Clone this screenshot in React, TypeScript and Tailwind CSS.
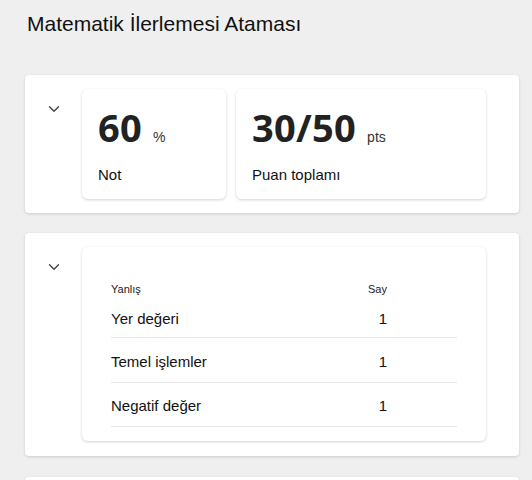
import { ChevronDown } from 'lucide-react'

const rows = [
  { label: 'Yer değeri', count: 1, h: 'h-[37px]', pad: 'pt-0' },
  { label: 'Temel işlemler', count: 1, h: 'h-[45px]', pad: 'pt-[4px]' },
  { label: 'Negatif değer', count: 1, h: 'h-[44px]', pad: 'pt-[3px]' },
]

function Chevron() {
  return (
    <div className="w-[57px] flex justify-center pt-[11px] pl-[1px]">
      <ChevronDown size={18} strokeWidth={1.8} className="text-[#444]" />
    </div>
  )
}

function Stat({ value, unit, label, width }: { value: string; unit: string; label: string; width: string }) {
  return (
    <div className={`${width} h-[110px] bg-white rounded-md shadow-[0_1px_3px_rgba(0,0,0,0.18)] pl-[16px] pt-[18px]`}>
      <div className="flex items-baseline gap-[11px]">
        <span className="text-[38px] leading-[40px] font-bold text-[#222] font-['Open_Sans',sans-serif] tracking-[0.3px]">
          {value}
        </span>
        <span className="text-[14px] text-[#333]">{unit}</span>
      </div>
      <div className="mt-[16px] text-[15px] text-[#111]">{label}</div>
    </div>
  )
}

export default function App() {
  return (
    <div className="h-[480px] bg-[#efefef] font-['Liberation_Sans',Arial,sans-serif] pt-[11px] overflow-hidden">
      <h1 className="ml-[27px] text-[21px] leading-[26px] text-[#111]">Matematik İlerlemesi Ataması</h1>

      <div className="ml-[25px] w-[494px] mt-[38px] bg-white rounded-[4px] shadow-[0_1px_3px_rgba(0,0,0,0.15)] flex pt-[14px] pb-[14px]">
        <Chevron />
        <div className="flex gap-[10px]">
          <Stat value="60" unit="%" label="Not" width="w-[144px]" />
          <Stat value="30/50" unit="pts" label="Puan toplamı" width="w-[250px]" />
        </div>
      </div>

      <div className="ml-[25px] w-[494px] mt-[20px] bg-white rounded-[4px] shadow-[0_1px_3px_rgba(0,0,0,0.15)] flex pt-[14px] pb-[15px]">
        <Chevron />
        <div className="w-[404px] bg-white rounded-md shadow-[0_1px_3px_rgba(0,0,0,0.18)] pt-[30px] pb-[14px] pl-[29px]">
          <div className="w-[346px]">
            <div className="flex items-center justify-between h-[24px] text-[11px] text-[#222]">
              <span>Yanlış</span>
              <span className="mr-[70px]">Say</span>
            </div>
            {rows.map((r) => (
              <div key={r.label} className={`flex items-center justify-between ${r.h} ${r.pad} border-b border-[#e6e6e6] text-[15px] text-[#111]`}>
                <span>{r.label}</span>
                <span className="mr-[70px]">{r.count}</span>
              </div>
            ))}
          </div>
        </div>
      </div>

      <div className="ml-[25px] w-[494px] mt-[21px] h-[40px] bg-white rounded-[4px] shadow-[0_1px_3px_rgba(0,0,0,0.15)]" />
    </div>
  )
}
